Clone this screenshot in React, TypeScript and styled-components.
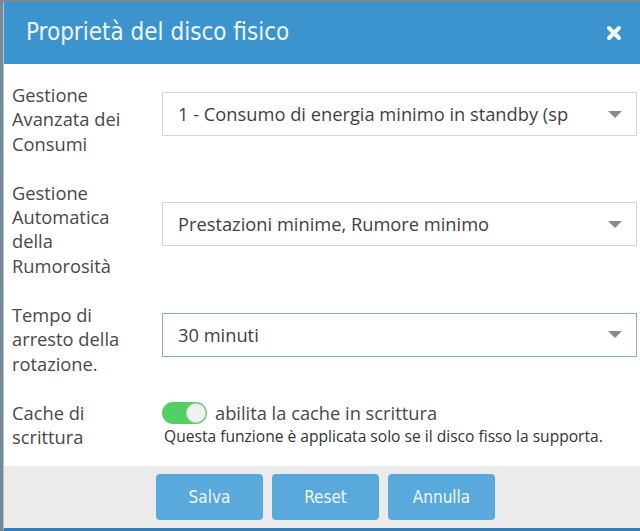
import styled, { createGlobalStyle } from "styled-components";

const GlobalStyle = createGlobalStyle`
  html, body {
    margin: 0;
    padding: 0;
    overflow: hidden;
  }
  body {
    background: #7b8793;
    font-family: "Open Sans", "Liberation Sans", sans-serif;
  }
`;

const condensed = `"Liberation Sans Narrow", "DejaVu Sans Condensed", "Liberation Sans", sans-serif`;

const Dialog = styled.div`
  margin: 2px 0 0 3px;
  width: 637px;
  height: 529px;
  box-sizing: border-box;
  border-left: 1px solid #9cc9ea;
  border-bottom: 3px solid #2f7fbf;
  background: #fff;
  display: flex;
  flex-direction: column;
`;

const Header = styled.div`
  height: 62px;
  flex-shrink: 0;
  background: #3c94cf;
  display: flex;
  align-items: center;
  justify-content: space-between;
  padding: 0 16px 0 22px;
`;

const Title = styled.h1`
  margin: 0;
  font-family: ${condensed};
  font-weight: normal;
  font-size: 24px;
  color: #eef6fc;
  padding-bottom: 2px;
`;

const CloseButton = styled.button`
  border: 0;
  background: none;
  padding: 0;
  width: 20px;
  height: 20px;
  display: flex;
  align-items: center;
  justify-content: center;
  cursor: pointer;
`;

const Body = styled.div`
  flex: 1;
  display: flex;
  flex-direction: column;
  gap: 25px;
  padding: 19px 3px 0 8px;
`;

const Row = styled.div`
  display: grid;
  grid-template-columns: 150px minmax(0, 1fr);
  align-items: center;
`;

const Label = styled.div`
  font-size: 18.3px;
  line-height: 24.3px;
  color: #484848;
  padding-right: 14px;
`;

const Select = styled.div<{ $focused?: boolean }>`
  height: 44px;
  min-width: 0;
  box-sizing: border-box;
  margin-bottom: 10px;
  border: 1px solid ${(p) => (p.$focused ? "#86acc9" : "#d6d6d6")};
  background: #fff;
  display: flex;
  align-items: center;
  padding: 0 13px 0 15px;
  gap: 24px;
`;

const SelectText = styled.span`
  flex: 1;
  min-width: 0;
  overflow: hidden;
  white-space: nowrap;
  font-size: 18.3px;
  color: #3f3f3f;
  padding-bottom: 1px;
`;

const Arrow = styled.span`
  flex-shrink: 0;
  width: 0;
  height: 0;
  border-left: 7px solid transparent;
  border-right: 7px solid transparent;
  border-top: 7px solid #8a8a8a;
  margin-right: 1px;
`;

const CacheBox = styled.div`
  align-self: start;
  display: flex;
  flex-direction: column;
`;

const ToggleLine = styled.label`
  display: flex;
  align-items: center;
  gap: 8px;
  height: 24px;
  font-size: 18.3px;
  color: #484848;
`;

const Toggle = styled.span<{ $on: boolean }>`
  width: 45px;
  height: 22px;
  box-sizing: border-box;
  border-radius: 11px;
  background: ${(p) => (p.$on ? "#52d063" : "#d8d8d8")};
  display: flex;
  align-items: center;
  justify-content: ${(p) => (p.$on ? "flex-end" : "flex-start")};
  padding: 1px;
`;

const Knob = styled.span`
  width: 20px;
  height: 20px;
  box-sizing: border-box;
  border-radius: 50%;
  background: #f1f1f1;
  border: 1px solid #d0d0d0;
`;

const Hint = styled.div`
  font-size: 15.6px;
  line-height: 22px;
  color: #333;
  padding-left: 2px;
  white-space: nowrap;
`;

const Footer = styled.div`
  height: 62px;
  flex-shrink: 0;
  background: #ebebeb;
  display: flex;
  align-items: center;
  justify-content: center;
  gap: 9px;
  padding-left: 7px;
`;

const Button = styled.button`
  width: 107px;
  height: 46px;
  border: 0;
  border-radius: 4px;
  background: #5aa9dd;
  color: #eef7fd;
  font-family: ${condensed};
  font-size: 17px;
  cursor: pointer;
`;

// the first value is truncated in the original widget
const fields = [
  {
    label: "Gestione Avanzata dei Consumi",
    value: "1 - Consumo di energia minimo in standby (sp",
  },
  {
    label: "Gestione Automatica della Rumorosità",
    value: "Prestazioni minime, Rumore minimo",
  },
  {
    label: "Tempo di arresto della rotazione.",
    value: "30 minuti",
    focused: true,
  },
];

export default function App() {
  return (
    <>
      <GlobalStyle />
      <Dialog>
        <Header>
          <Title>Proprietà del disco fisico</Title>
          <CloseButton aria-label="Chiudi">
            <svg width="16" height="16" viewBox="0 0 16 16">
              <path
                d="M3 3 L13 13 M13 3 L3 13"
                stroke="#f4f9fd"
                strokeWidth="4"
                strokeLinecap="round"
              />
            </svg>
          </CloseButton>
        </Header>
        <Body>
          {fields.map((f) => (
            <Row key={f.label}>
              <Label>{f.label}</Label>
              <Select $focused={f.focused}>
                <SelectText>{f.value}</SelectText>
                <Arrow />
              </Select>
            </Row>
          ))}
          <Row>
            <Label>Cache di scrittura</Label>
            <CacheBox>
              <ToggleLine>
                <Toggle $on>
                  <Knob />
                </Toggle>
                abilita la cache in scrittura
              </ToggleLine>
              <Hint>
                Questa funzione è applicata solo se il disco fisso la supporta.
              </Hint>
            </CacheBox>
          </Row>
        </Body>
        <Footer>
          <Button>Salva</Button>
          <Button>Reset</Button>
          <Button>Annulla</Button>
        </Footer>
      </Dialog>
    </>
  );
}
